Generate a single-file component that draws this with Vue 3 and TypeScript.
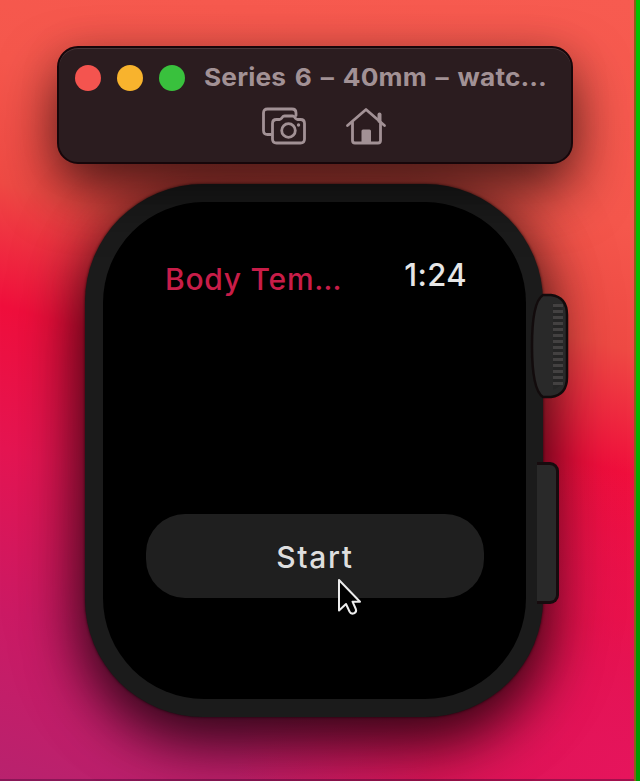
<script setup lang="ts">
const title = 'Series 6 – 40mm – watc…'
const appName = 'Body Tem…'
const clock = '1:24'
const action = 'Start'
const lights: string[] = ['close', 'minimize', 'zoom']
const ridges: number[] = Array.from({ length: 14 }, (_, i) => 12 + i * 6)
</script>

<template>
  <div class="desktop">
    <main class="wallpaper">
      <header class="toolbar">
        <div class="titlebar">
          <span v-for="light in lights" :key="light" class="light" :class="light"></span>
          <span class="title">{{ title }}</span>
        </div>
        <div class="tools">
          <svg class="tool" width="46" height="40" viewBox="0 0 46 40" fill="none">
            <path d="M10 28.500H6.500Q2.500 28.500 2.500 24.500V7Q2.500 3 6.500 3H31Q35 3 35 7V9.500" />
            <path d="M15.500 13.500H18.500Q19.700 13.500 20.500 12.300L21.500 11Q22.200 10 23.500 10H31.500Q32.800 10 33.500 11L34.500 12.300Q35.300 13.500 36.500 13.500H39.500Q43.500 13.500 43.500 17.500V33Q43.500 37 39.500 37H15.500Q11.500 37 11.500 33V17.500Q11.500 13.500 15.500 13.500Z" />
            <circle cx="27.500" cy="24.500" r="6.800" />
            <circle class="solid" cx="37.500" cy="19" r="1.700" />
          </svg>
          <svg class="tool" width="42" height="40" viewBox="0 0 42 40" fill="none">
            <path d="M2.500 19.500L21 3.500L39.500 19.500" />
            <path d="M7.500 16.500V34.500Q7.500 37 10 37H33Q35.500 37 35.500 34.500V16.500" />
            <path d="M34.500 8.500V15" class="chimney" />
            <path class="solid" d="M16.500 36.500V25Q16.500 23.500 18 23.500H24.500Q26 23.500 26 25V36.500Z" />
          </svg>
        </div>
      </header>

      <section class="watch">
        <div class="case">
          <div class="screen">
            <div class="status">
              <span class="app-name">{{ appName }}</span>
              <span class="clock">{{ clock }}</span>
            </div>
            <button class="start" type="button">
              <span>{{ action }}</span>
              <svg class="cursor" width="28" height="42" viewBox="0 0 28 42">
                <path d="M3 3V33.500L10 27L13.500 34.500Q15 37.500 18 36.300Q21 35 19.800 32L16.500 24.700H24Z" />
              </svg>
            </button>
          </div>
        </div>
        <div class="side">
          <svg class="crown" width="42" height="108" viewBox="0 0 42 108">
            <path class="crown-body" d="M14 3H22Q38 5 38 23V85Q38 103 22 105H14C6 100 3 82 3 54S6 8 14 3Z" />
            <path class="crown-edge" d="M24 11Q32 13 34 20V88Q32 95 24 98Z" />
            <rect v-for="y in ridges" :key="y" class="ridge" x="24" :y="y" width="10" height="3" />
          </svg>
          <div class="side-button"></div>
        </div>
      </section>
    </main>
    <aside class="edge"></aside>
  </div>
</template>

<style>
body {
  margin: 0;
  overflow: hidden;
}
</style>

<style scoped>
.desktop {
  display: flex;
  width: 640px;
  height: 781px;
  overflow: hidden;
  font-family: Inter, "Liberation Sans", sans-serif;
}

.wallpaper {
  flex: 1;
  box-sizing: border-box;
  padding: 46px 0 0 57px;
  border-bottom: 2px solid rgba(80, 10, 60, 0.45);
  background:
    radial-gradient(ellipse 400px 330px at 100% 100%, rgba(232, 20, 92, 0.95), rgba(236, 14, 70, 0.5) 50%, rgba(233, 10, 53, 0) 100%),
    linear-gradient(195deg, #f75b50 0%, #f5574c 24%, #ef4a44 37%, #f00f3c 50%, #e51552 65%, #cc1a64 82%, #b8226e 100%);
  background-origin: border-box;
}

.edge {
  width: 4px;
  border-left: 2px solid #886017;
  background: linear-gradient(#00c400 0%, #00bd00 50%, #009600 75%, #009a00 100%);
}

.toolbar {
  position: relative;
  box-sizing: border-box;
  width: 516px;
  height: 118px;
  padding-top: 15px;
  border: 2px solid #16060a;
  border-radius: 21px;
  background: #2b1c1f;
  box-shadow:
    inset 0 1px 0 #463639,
    0 26px 56px rgba(0, 0, 0, 0.64),
    0 4px 40px rgba(0, 0, 0, 0.12);
}

.titlebar {
  display: flex;
  align-items: center;
  height: 29px;
  padding-left: 16px;
}

.light {
  flex: none;
  width: 26px;
  height: 26px;
  margin-right: 16px;
  border-radius: 50%;
}

.close {
  background: #f4544f;
}

.minimize {
  background: #f8b32d;
}

.zoom {
  background: #39c13d;
}

.title {
  margin-left: 3px;
  color: #a29195;
  font-size: 24.3px;
  font-weight: 700;
  letter-spacing: 0.15px;
  word-spacing: 2.2px;
  line-height: 29px;
  white-space: nowrap;
  transform: scaleX(1.08);
  transform-origin: left center;
}

.tools {
  display: flex;
  gap: 38px;
  padding: 14px 0 0 202px;
}

.tool {
  stroke: #a29195;
  stroke-width: 2.8;
  stroke-linecap: round;
  stroke-linejoin: round;
}

.solid {
  fill: #a29195;
  stroke: none;
}

.chimney {
  stroke-width: 4;
}

.watch {
  display: flex;
  margin: 20px 0 0 28px;
}

.case {
  box-sizing: border-box;
  width: 458px;
  height: 533px;
  padding: 18px 17px 18px 18px;
  border-radius: 118px;
  background: #1b1b1b;
  box-shadow:
    0 26px 56px rgba(0, 0, 0, 0.6),
    0 6px 70px rgba(0, 0, 0, 0.5),
    0 0 3px rgba(20, 5, 8, 0.8);
}

.screen {
  display: flex;
  flex-direction: column;
  justify-content: space-between;
  box-sizing: border-box;
  height: 497px;
  padding: 55px 42px 101px 43px;
  border-radius: 101px;
  background: #000;
}

.status {
  display: flex;
  justify-content: space-between;
  padding: 0 17px 0 19px;
  line-height: 36px;
  white-space: nowrap;
}

.app-name {
  padding-top: 4px;
  color: #c81d48;
  font-size: 30px;
  font-weight: 500;
  letter-spacing: 0.75px;
}

.clock {
  color: #e6e6e6;
  font-size: 31px;
  font-weight: 500;
  letter-spacing: 0.4px;
}

.start {
  position: relative;
  width: 338px;
  height: 84px;
  padding: 2px 0 0;
  border: 0;
  border-radius: 39px;
  background: #1f1f1f;
  color: #dedede;
  font-family: inherit;
  font-size: 30px;
  font-weight: 500;
  letter-spacing: 1.7px;
}

.cursor {
  position: absolute;
  top: 63px;
  left: 190px;
}

.cursor path {
  fill: #000;
  stroke: #ededed;
  stroke-width: 2;
  stroke-linejoin: round;
}

.side {
  position: relative;
  display: flex;
  flex-direction: column;
  margin-left: -14px;
  padding-top: 108px;
}

.crown {
  display: block;
}

.crown-body {
  fill: #292929;
  stroke: #120b0c;
  stroke-width: 2.5;
}

.crown-edge {
  fill: #252525;
}

.ridge {
  fill: #434141;
}

.side-button {
  box-sizing: border-box;
  width: 22px;
  height: 142px;
  margin: 62px 0 0 8px;
  border: 3px solid #170b0e;
  border-left: 0;
  border-radius: 0 9px 9px 0;
  background: #292929;
}
</style>
